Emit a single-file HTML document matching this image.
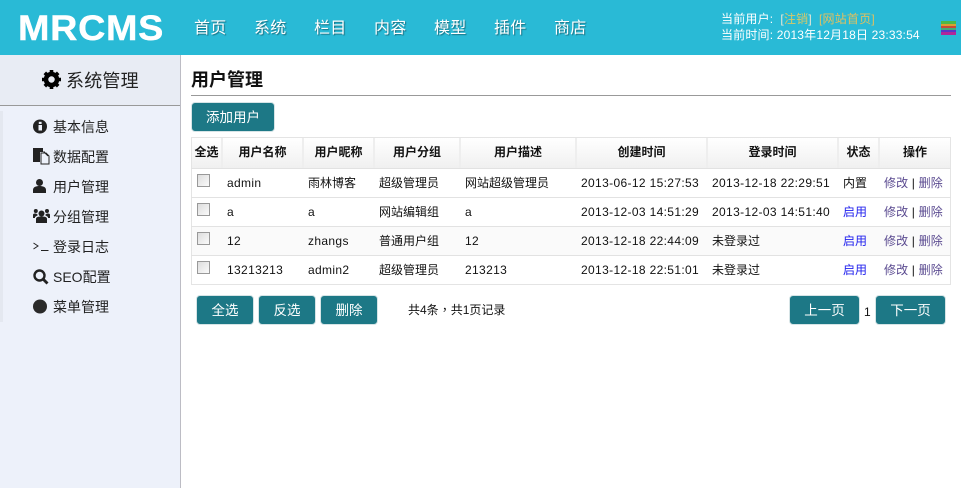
<!DOCTYPE html>
<html><head><meta charset="utf-8"><style>
*{margin:0;padding:0;box-sizing:border-box}
html,body{width:961px;height:488px;overflow:hidden;background:#fff;font-family:"Liberation Sans","Noto Sans CJK SC",sans-serif;font-size:12px;color:#222}
.a{position:absolute;white-space:nowrap}
.nav{top:18px;font-size:16px;line-height:22px;color:#fff;letter-spacing:.3px;text-shadow:1px 1px 1px #1a6f80}
.m{left:53px;font-size:14px;line-height:20px;color:#222}
.ic{position:absolute;left:33px}
.btn{position:absolute;background:#1d7886;border:1px solid #d6e4e6;border-radius:4px;color:#fff;font-size:13.500px;text-align:center;line-height:29px;height:30px}
.th{position:absolute;top:138px;height:30px;background:linear-gradient(#fff,#f0f0f0);border-right:2px solid #eee;font-weight:bold;text-align:center;line-height:29px;color:#111}
.hl{position:absolute;left:191px;width:760px;height:1px;background:#e2e2e2}
.t{position:absolute;line-height:16px;white-space:nowrap;color:#111;letter-spacing:.35px}
.c{letter-spacing:0}
.o{letter-spacing:.15px}
.cb{position:absolute;left:197px;width:13px;height:13px;border:1px solid #999;background:linear-gradient(135deg,#ddd,#fafafa)}
.l{color:#5a4a90}.b{color:#2222ee}
</style></head><body>
<div class="a" style="left:0;top:0;width:961px;height:55px;background:#29bad6"></div>
<div class="a" style="left:18px;top:9px;font-size:35px;line-height:40px;font-weight:bold;color:#fff;letter-spacing:.6px;-webkit-text-stroke:.4px #fff;transform:scaleX(1.08);transform-origin:left">MRCMS</div>
<div class="a nav" style="left:194px">首页</div>
<div class="a nav" style="left:254px">系统</div>
<div class="a nav" style="left:314px">栏目</div>
<div class="a nav" style="left:374px">内容</div>
<div class="a nav" style="left:434px">模型</div>
<div class="a nav" style="left:494px">插件</div>
<div class="a nav" style="left:554px">商店</div>
<div class="a" style="left:721px;top:11px;line-height:16px;color:#fff;letter-spacing:.2px">当前用户: &nbsp;<span style="color:#e8e8d8">[</span><span style="color:#d8c868">注销</span><span style="color:#e8e8d8">]</span> &nbsp;<span style="color:#e0c060">[网站首页]</span></div>
<div class="a" style="left:721px;top:27px;line-height:16px;color:#fff;letter-spacing:.18px">当前时间: 2013年12月18日 23:33:54</div>
<div class="a" style="left:941px;top:21px;width:15px;height:14px;background:linear-gradient(#4cb848 0 3px,#d8a030 3px 5px,#c84838 5px 7px,#48a878 7px 9px,#5838c8 9px 11px,#b02898 11px)"></div>

<div class="a" style="left:0;top:55px;width:181px;height:433px;background:#edf1fa;border-right:1px solid #bcbcc4"></div>
<div class="a" style="left:0;top:55px;width:180px;height:51px;background:#e8ecf4;border-bottom:1px solid #999"></div>
<div class="a" style="left:0;top:111px;width:3px;height:211px;background:#e4e8f0"></div>
<svg class="a" style="left:42px;top:70px" width="19" height="19" viewBox="0 0 19 19"><circle cx="9.500" cy="9.500" r="5.500" fill="none" stroke="#000" stroke-width="4.500"/><g stroke="#000" stroke-width="3.600"><path d="M9.500 0v4M9.500 15v4M0 9.500h4M15 9.500h4M2.800 2.800l2.800 2.800M13.400 13.400l2.800 2.800M16.200 2.800l-2.800 2.800M5.600 13.400l-2.800 2.800"/></g></svg>
<div class="a" style="left:66px;top:69px;font-size:18px;line-height:24px;color:#222;letter-spacing:.2px">系统管理</div>

<svg class="ic" style="top:119px" width="15" height="15" viewBox="0 0 15 15"><circle cx="7" cy="7.500" r="7" fill="#222"/><rect x="5.500" y="6" width="3.500" height="5.500" fill="#edf1fa"/><rect x="5.800" y="2.800" width="2.800" height="2.200" fill="#edf1fa"/></svg>
<div class="a m" style="top:117px">基本信息</div>
<svg class="ic" style="top:148px" width="17" height="17" viewBox="0 0 17 17"><path d="M0 0h10v4H7v10H0z" fill="#222"/><path d="M8 5h5l3 3v8H8z" fill="#edf1fa" stroke="#222"/><path d="M12 4h-1v0l4 4" stroke="#222" fill="none"/></svg>
<div class="a m" style="top:147px">数据配置</div>
<svg class="ic" style="top:179px" width="14" height="15" viewBox="0 0 14 15"><circle cx="6.500" cy="3.500" r="3.500" fill="#222"/><path d="M0 14V11C0 8 3 7 6.500 7S13 8 13 11V14z" fill="#222"/></svg>
<div class="a m" style="top:177px">用户管理</div>
<svg class="ic" style="top:208px" width="17" height="16" viewBox="0 0 17 16"><circle cx="8.500" cy="5.500" r="3" fill="#222"/><circle cx="2.800" cy="3" r="2" fill="#222"/><circle cx="14" cy="3" r="2" fill="#222"/><path d="M3 15V11C3 9 5 8.500 8.500 8.500S14 9 14 11V15z" fill="#222"/><path d="M0 10V7C0 5.700 1 5.500 3 5.500L5 7 2 9V10zM17 10V7C17 5.700 16 5.500 14 5.500L12 7 15 9V10z" fill="#222"/></svg>
<div class="a m" style="top:207px">分组管理</div>
<svg class="ic" style="top:242px" width="16" height="10" viewBox="0 0 16 10"><path d="M0.500 1L5 4 0.500 7M8 8.500h7.500" fill="none" stroke="#222" stroke-width="1"/></svg>
<div class="a m" style="top:237px">登录日志</div>
<svg class="ic" style="top:269px" width="16" height="16" viewBox="0 0 16 16"><circle cx="6.500" cy="6.500" r="5" fill="none" stroke="#222" stroke-width="2.400"/><path d="M10 10l4.500 4.500" stroke="#222" stroke-width="2.800"/></svg>
<div class="a m" style="top:267px">SEO配置</div>
<svg class="ic" style="top:299px" width="15" height="15" viewBox="0 0 15 15"><circle cx="7" cy="7.500" r="7" fill="#2a2a2a"/></svg>
<div class="a m" style="top:297px">菜单管理</div>

<div class="a" style="left:191px;top:68px;font-size:18px;line-height:24px;font-weight:bold;color:#111">用户管理</div>
<div class="a" style="left:191px;top:95px;width:760px;height:1px;background:#999"></div>
<div class="btn" style="left:191px;top:102px;width:84px;line-height:30px">添加用户</div>

<div class="a" style="left:191px;top:226px;width:760px;height:29px;background:#fafafa"></div>
<div class="a" style="left:191px;top:137px;width:760px;height:148px;border:1px solid #e4e4e4"></div>
<div class="th" style="left:192px;width:31px">全选</div>
<div class="th" style="left:223px;width:81px">用户名称</div>
<div class="th" style="left:304px;width:71px">用户昵称</div>
<div class="th" style="left:375px;width:86px">用户分组</div>
<div class="th" style="left:461px;width:116px">用户描述</div>
<div class="th" style="left:577px;width:131px">创建时间</div>
<div class="th" style="left:708px;width:131px">登录时间</div>
<div class="th" style="left:839px;width:41px">状态</div>
<div class="th" style="left:880px;width:70px;border-right:0">操作</div>
<div class="hl" style="top:168px"></div><div class="hl" style="top:197px"></div><div class="hl" style="top:226px"></div><div class="hl" style="top:255px"></div>

<div class="cb" style="top:174px"></div>
<div class="t" style="left:227px;top:175px">admin</div><div class="t c" style="left:308px;top:175px">雨林博客</div><div class="t c" style="left:379px;top:175px">超级管理员</div><div class="t c" style="left:465px;top:175px">网站超级管理员</div><div class="t" style="left:581px;top:175px">2013-06-12 15:27:53</div><div class="t" style="left:712px;top:175px">2013-12-18 22:29:51</div><div class="t c" style="left:843px;top:175px">内置</div><div class="t o" style="left:884px;top:175px"><span class="l">修改</span> | <span class="l">删除</span></div>

<div class="cb" style="top:203px"></div>
<div class="t" style="left:227px;top:204px">a</div><div class="t" style="left:308px;top:204px">a</div><div class="t c" style="left:379px;top:204px">网站编辑组</div><div class="t" style="left:465px;top:204px">a</div><div class="t" style="left:581px;top:204px">2013-12-03 14:51:29</div><div class="t" style="left:712px;top:204px">2013-12-03 14:51:40</div><div class="t c b" style="left:843px;top:204px">启用</div><div class="t o" style="left:884px;top:204px"><span class="l">修改</span> | <span class="l">删除</span></div>

<div class="cb" style="top:232px"></div>
<div class="t" style="left:227px;top:233px">12</div><div class="t" style="left:308px;top:233px">zhangs</div><div class="t c" style="left:379px;top:233px">普通用户组</div><div class="t" style="left:465px;top:233px">12</div><div class="t" style="left:581px;top:233px">2013-12-18 22:44:09</div><div class="t c" style="left:712px;top:233px">未登录过</div><div class="t c b" style="left:843px;top:233px">启用</div><div class="t o" style="left:884px;top:233px"><span class="l">修改</span> | <span class="l">删除</span></div>

<div class="cb" style="top:261px"></div>
<div class="t" style="left:227px;top:262px">13213213</div><div class="t" style="left:308px;top:262px">admin2</div><div class="t c" style="left:379px;top:262px">超级管理员</div><div class="t" style="left:465px;top:262px">213213</div><div class="t" style="left:581px;top:262px">2013-12-18 22:51:01</div><div class="t c" style="left:712px;top:262px">未登录过</div><div class="t c b" style="left:843px;top:262px">启用</div><div class="t o" style="left:884px;top:262px"><span class="l">修改</span> | <span class="l">删除</span></div>

<div class="btn" style="left:196px;top:295px;width:58px">全选</div>
<div class="btn" style="left:258px;top:295px;width:58px">反选</div>
<div class="btn" style="left:320px;top:295px;width:58px">删除</div>
<div class="t c" style="left:408px;top:302px">共4条<span style="font-family:'Noto Sans CJK TC',sans-serif">，</span>共1页记录</div>
<div class="btn" style="left:789px;top:295px;width:71px">上一页</div>
<div class="t" style="left:864px;top:304px">1</div>
<div class="btn" style="left:875px;top:295px;width:71px">下一页</div>
</body></html>
